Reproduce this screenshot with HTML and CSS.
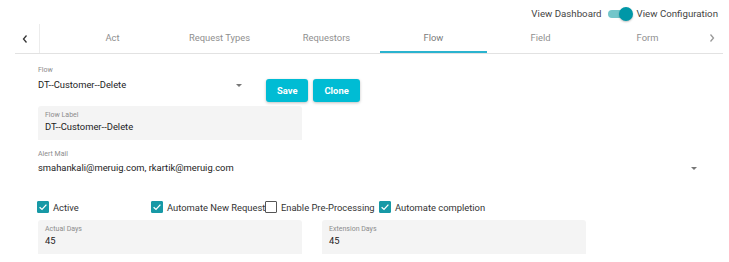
FILE: index.html
```html
<!doctype html>
<html lang="en">
  <head>
    <meta charset="UTF-8" />
    <meta name="viewport" content="width=device-width, initial-scale=1.0" />
    <title>Flow Configuration</title>
    <link rel="stylesheet" href="styles.css">
  </head>
  <body>
    <div class="topbar">
      <span>View Dashboard</span>
      <span class="switch"><span class="knob"></span></span>
      <span>View Configuration</span>
    </div>

    <div class="tabs">
      <div class="tab-arrow left">
        <svg viewBox="0 0 8 10"><path d="M5.5 1.5 L2.5 5 L5.5 8.5" /></svg>
      </div>
      <div class="tab-list">
        <div class="tab">Act</div>
        <div class="tab">Request Types</div>
        <div class="tab">Requestors</div>
        <div class="tab active">Flow</div>
        <div class="tab">Field</div>
        <div class="tab">Form</div>
      </div>
      <div class="tab-arrow right">
        <svg viewBox="0 0 8 10"><path d="M2.5 1.5 L5.5 5 L2.5 8.5" /></svg>
      </div>
    </div>

    <div class="form">
      <div class="flow-row">
        <div class="select flow-select">
          <div class="label">Flow</div>
          <div class="select-value">
            <span>DT--Customer--Delete</span>
            <span class="caret"></span>
          </div>
        </div>
        <button class="btn">Save</button>
        <button class="btn">Clone</button>
      </div>

      <div class="filled">
        <div class="label">Flow Label</div>
        <div class="value">DT--Customer--Delete</div>
      </div>

      <div class="select alert-select">
        <div class="label">Alert Mail</div>
        <div class="select-value">
          <span>smahankali@meruig.com, rkartik@meruig.com</span>
          <span class="caret"></span>
        </div>
      </div>

      <div class="checks">
        <label class="check"><span class="box checked"></span>Active</label>
        <label class="check"><span class="box checked"></span>Automate New Request</label>
        <label class="check"><span class="box"></span>Enable Pre-Processing</label>
        <label class="check"><span class="box checked"></span>Automate completion</label>
      </div>

      <div class="days">
        <div class="filled">
          <div class="label">Actual Days</div>
          <div class="value">45</div>
        </div>
        <div class="filled">
          <div class="label">Extension Days</div>
          <div class="value">45</div>
        </div>
      </div>
    </div>
  </body>
</html>
```

FILE: styles.css
```css
* {
  margin: 0;
  padding: 0;
  box-sizing: border-box;
}

body {
  font-family: Roboto, 'Liberation Sans', sans-serif;
  font-size: 9.4px;
  color: #333;
  background: #fff;
}

.topbar {
  height: 23px;
  padding: 5px 11px 0 0;
  display: flex;
  justify-content: flex-end;
  align-items: center;
  align-content: flex-start;
  font-size: 9.7px;
  color: #444;
}

.topbar span:first-child,
.topbar span:last-child {
  line-height: 18px;
}

.switch {
  position: relative;
  width: 23px;
  height: 8px;
  margin: 0 6px 0 6px;
  border-radius: 4px;
  background: #73c6ca;
}

.knob {
  position: absolute;
  right: -2px;
  top: -3px;
  width: 14px;
  height: 14px;
  border-radius: 50%;
  background: #0097a7;
  box-shadow: 0 1px 2px rgba(0, 0, 0, 0.25);
}

.tabs {
  display: flex;
  height: 31px;
  margin: 0 6px 0 15px;
  border-bottom: 1px solid #e2e2e2;
}

.tab-arrow {
  display: flex;
  align-items: center;
  justify-content: center;
}

.tab-arrow svg {
  width: 8px;
  height: 10px;
  fill: none;
  stroke-width: 1.3;
}

.tab-arrow.left {
  width: 25px;
  padding-right: 4px;
  border-right: 1px solid #ececec;
  margin-top: 1px;
}

.tab-arrow.left svg {
  stroke: #333;
}

.tab-arrow.right {
  width: 22px;
}

.tab-arrow.right svg {
  stroke: #999;
}

.tab-list {
  display: flex;
  padding-left: 19px;
}

.tab {
  width: 107px;
  display: flex;
  align-items: center;
  justify-content: center;
  color: #8f8f8f;
  border-bottom: 2px solid transparent;
  padding-top: 1px;
}

.tab.active {
  color: #7a7a7a;
  border-bottom-color: #2ab3cf;
}

.form {
  padding: 12px 0 0 38px;
}

.label {
  font-size: 7px;
  line-height: 9px;
  color: #8c8c8c;
}

.flow-row {
  display: flex;
  align-items: flex-start;
}

.select-value {
  display: flex;
  justify-content: space-between;
  align-items: center;
  line-height: 14px;
  color: #222;
  margin-top: 3px;
}

.caret {
  width: 0;
  height: 0;
  margin-right: 8px;
  border-left: 3.5px solid transparent;
  border-right: 3.5px solid transparent;
  border-top: 3.5px solid #777;
}

.flow-select {
  width: 212px;
  margin-right: 16px;
}

.btn {
  height: 23px;
  margin: 13px 5px 0 0;
  padding: 0 11px;
  border: none;
  border-radius: 3px;
  background: #00bcd4;
  color: #fff;
  font-family: inherit;
  font-size: 9.4px;
  font-weight: bold;
  box-shadow: 0 1px 3px rgba(0, 0, 0, 0.25);
}

.filled {
  width: 264px;
  height: 34px;
  margin-top: 4px;
  padding: 5px 7px 0;
  background: #f4f4f4;
  border-radius: 3px 3px 0 0;
}

.filled .value {
  line-height: 14px;
  color: #222;
}

.alert-select {
  width: 662px;
  margin-top: 10px;
}

.alert-select .select-value {
  margin-top: 2px;
}

.alert-select .caret {
  margin-right: 3px;
}

.checks {
  display: flex;
  height: 16px;
  margin-top: 24px;
}

.check {
  width: 114px;
  flex: none;
  display: flex;
  align-items: center;
  white-space: nowrap;
  color: #333;
}

.box {
  width: 12px;
  height: 12px;
  margin: 0 4px 0 -1px;
  flex: none;
  border: 1px solid #555;
  border-radius: 1px;
}

.box.checked {
  border-color: #1799a6;
  background: #1799a6 url("data:image/svg+xml,%3Csvg xmlns='http://www.w3.org/2000/svg' viewBox='0 0 12 12'%3E%3Cpath d='M2.6 6.2 L5 8.4 L9.4 3.6' fill='none' stroke='white' stroke-width='1.3'/%3E%3C/svg%3E") center / 12px 12px no-repeat;
}

.days {
  display: flex;
  gap: 20px;
  margin-top: 5px;
}

.days .filled {
  margin-top: 0;
}
```
